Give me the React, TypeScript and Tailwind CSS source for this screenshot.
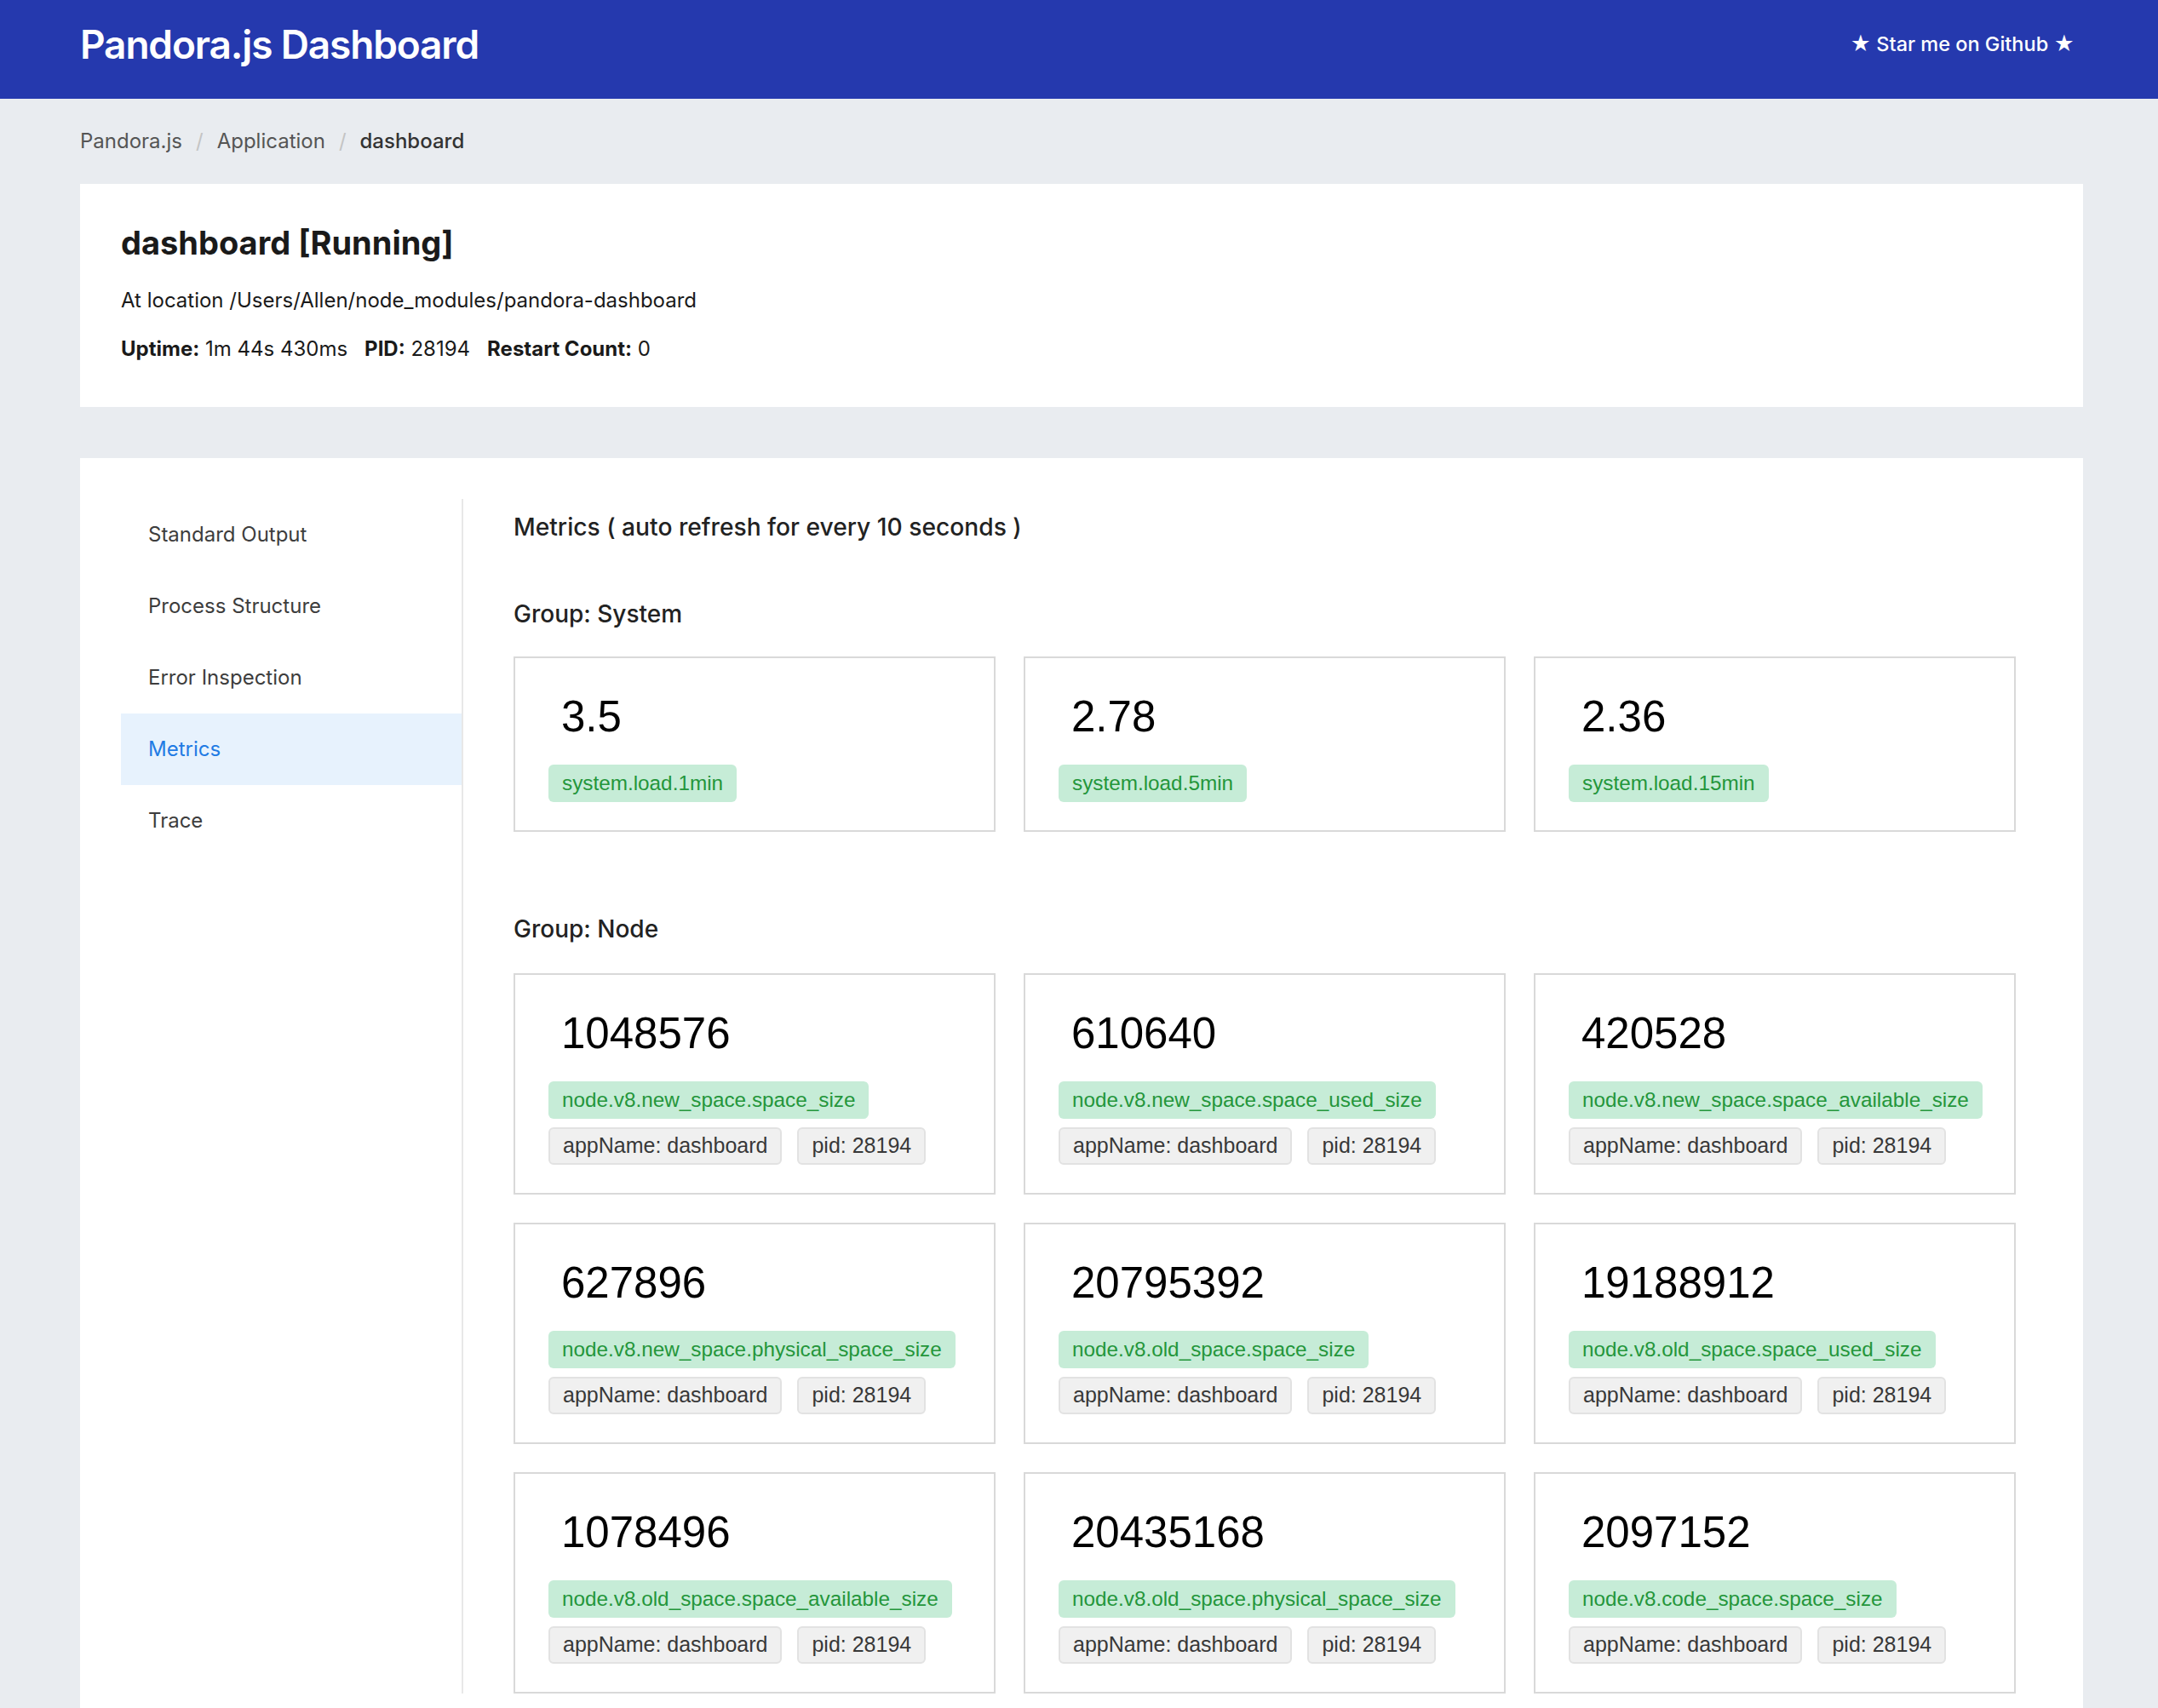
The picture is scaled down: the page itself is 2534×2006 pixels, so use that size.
import React from 'react';

const systemMetrics = [
  { value: '3.5', name: 'system.load.1min' },
  { value: '2.78', name: 'system.load.5min' },
  { value: '2.36', name: 'system.load.15min' },
];

const nodeMetrics = [
  { value: '1048576', name: 'node.v8.new_space.space_size' },
  { value: '610640', name: 'node.v8.new_space.space_used_size' },
  { value: '420528', name: 'node.v8.new_space.space_available_size' },
  { value: '627896', name: 'node.v8.new_space.physical_space_size' },
  { value: '20795392', name: 'node.v8.old_space.space_size' },
  { value: '19188912', name: 'node.v8.old_space.space_used_size' },
  { value: '1078496', name: 'node.v8.old_space.space_available_size' },
  { value: '20435168', name: 'node.v8.old_space.physical_space_size' },
  { value: '2097152', name: 'node.v8.code_space.space_size' },
];

const menu = ['Standard Output', 'Process Structure', 'Error Inspection', 'Metrics', 'Trace'];

type Metric = { value: string; name: string };

const MetricCard: React.FC<{ metric: Metric; tags?: string[] }> = ({ metric, tags }) => (
  <div className="border-2 border-[#d9d9d9] bg-white pl-[39px] pr-4 pt-[43px] pb-[33px] font-['Liberation_Sans',Arial,sans-serif]">
    <div className="pl-[15px] text-[51px] leading-[51px] text-black">{metric.value}</div>
    <div className="mt-[31px] flex">
      <span className="inline-flex h-[44px] items-center rounded-[6px] bg-[#c6ecd7] px-4 text-[24.3px] text-[#24963b]">
        {metric.name}
      </span>
    </div>
    {tags && (
      <div className="mt-[10px] flex gap-[18px]">
        {tags.map((t) => (
          <span
            key={t}
            className="inline-flex h-[44px] items-center rounded-[6px] border-2 border-[#e2e2e2] bg-[#f0f0f0] px-[15px] text-[25px] text-[#383838]"
          >
            {t}
          </span>
        ))}
      </div>
    )}
  </div>
);

export default function App() {
  return (
    <div className="min-h-screen bg-[#e9ecf0] font-['Inter','Noto_Sans',sans-serif]">
      {/* top bar */}
      <header className="flex h-[116px] items-center justify-between bg-[#2539ae] pb-[12px] pl-[94px] pr-[98px] text-white">
        <h1 className="text-[46px] font-semibold tracking-tight">Pandora.js Dashboard</h1>
        <a href="#" className="text-[23.5px] font-medium">★ Star me on Github ★</a>
      </header>

      {/* breadcrumb */}
      <nav className="flex h-[100px] items-center pl-[94px] text-[24px]">
        <span className="text-[#555555]">Pandora.js</span>
        <span className="px-4 text-[#c4c4c4]">/</span>
        <span className="text-[#555555]">Application</span>
        <span className="px-4 text-[#c4c4c4]">/</span>
        <span className="font-medium text-[#333333]">dashboard</span>
      </nav>

      {/* app info */}
      <section className="ml-[94px] mr-[88px] h-[262px] bg-white px-12 pt-[46px] text-[#1a1a1a]">
        <h2 className="text-[38px] font-bold leading-[46px]">dashboard [Running]</h2>
        <p className="mt-[29px] text-[24px] leading-[32px]">At location /Users/Allen/node_modules/pandora-dashboard</p>
        <p className="mt-[25px] flex gap-[20px] text-[24px] leading-[32px]">
          <span><b>Uptime:</b> 1m 44s 430ms</span>
          <span><b>PID:</b> 28194</span>
          <span><b>Restart Count:</b> 0</span>
        </p>
      </section>

      {/* main panel */}
      <section className="ml-[94px] mr-[88px] mt-[60px] flex bg-white pb-20 pl-12 pr-[79px] pt-12">
        <aside className="w-[402px] shrink-0 border-r-2 border-[#e8e8e8]">
          {menu.map((m) => (
            <div
              key={m}
              className={
                m === 'Metrics'
                  ? 'flex h-[84px] items-center bg-[#e7f2fd] pl-8 text-[24px] text-[#1f7be4]'
                  : 'flex h-[84px] items-center pl-8 text-[24px] text-[#3d3d3d]'
              }
            >
              {m}
            </div>
          ))}
        </aside>

        <div className="flex-1 pl-[59px]">
          <div className="flex h-[66px] items-center text-[28.2px] font-medium text-[#222222]">
            Metrics ( auto refresh for every 10 seconds )
          </div>

          <h3 className="mt-[49px] text-[28px] font-medium leading-[40px] text-[#222222]">Group: System</h3>
          <div className="mt-[30px] grid grid-cols-3 gap-x-[33px]">
            {systemMetrics.map((m) => (
              <MetricCard key={m.name} metric={m} />
            ))}
          </div>

          <h3 className="mt-[94px] text-[28px] font-medium leading-[40px] text-[#222222]">Group: Node</h3>
          <div className="mt-[32px] grid grid-cols-3 gap-x-[33px] gap-y-[33px]">
            {nodeMetrics.map((m) => (
              <MetricCard key={m.name} metric={m} tags={['appName: dashboard', 'pid: 28194']} />
            ))}
          </div>
        </div>
      </section>
    </div>
  );
}
